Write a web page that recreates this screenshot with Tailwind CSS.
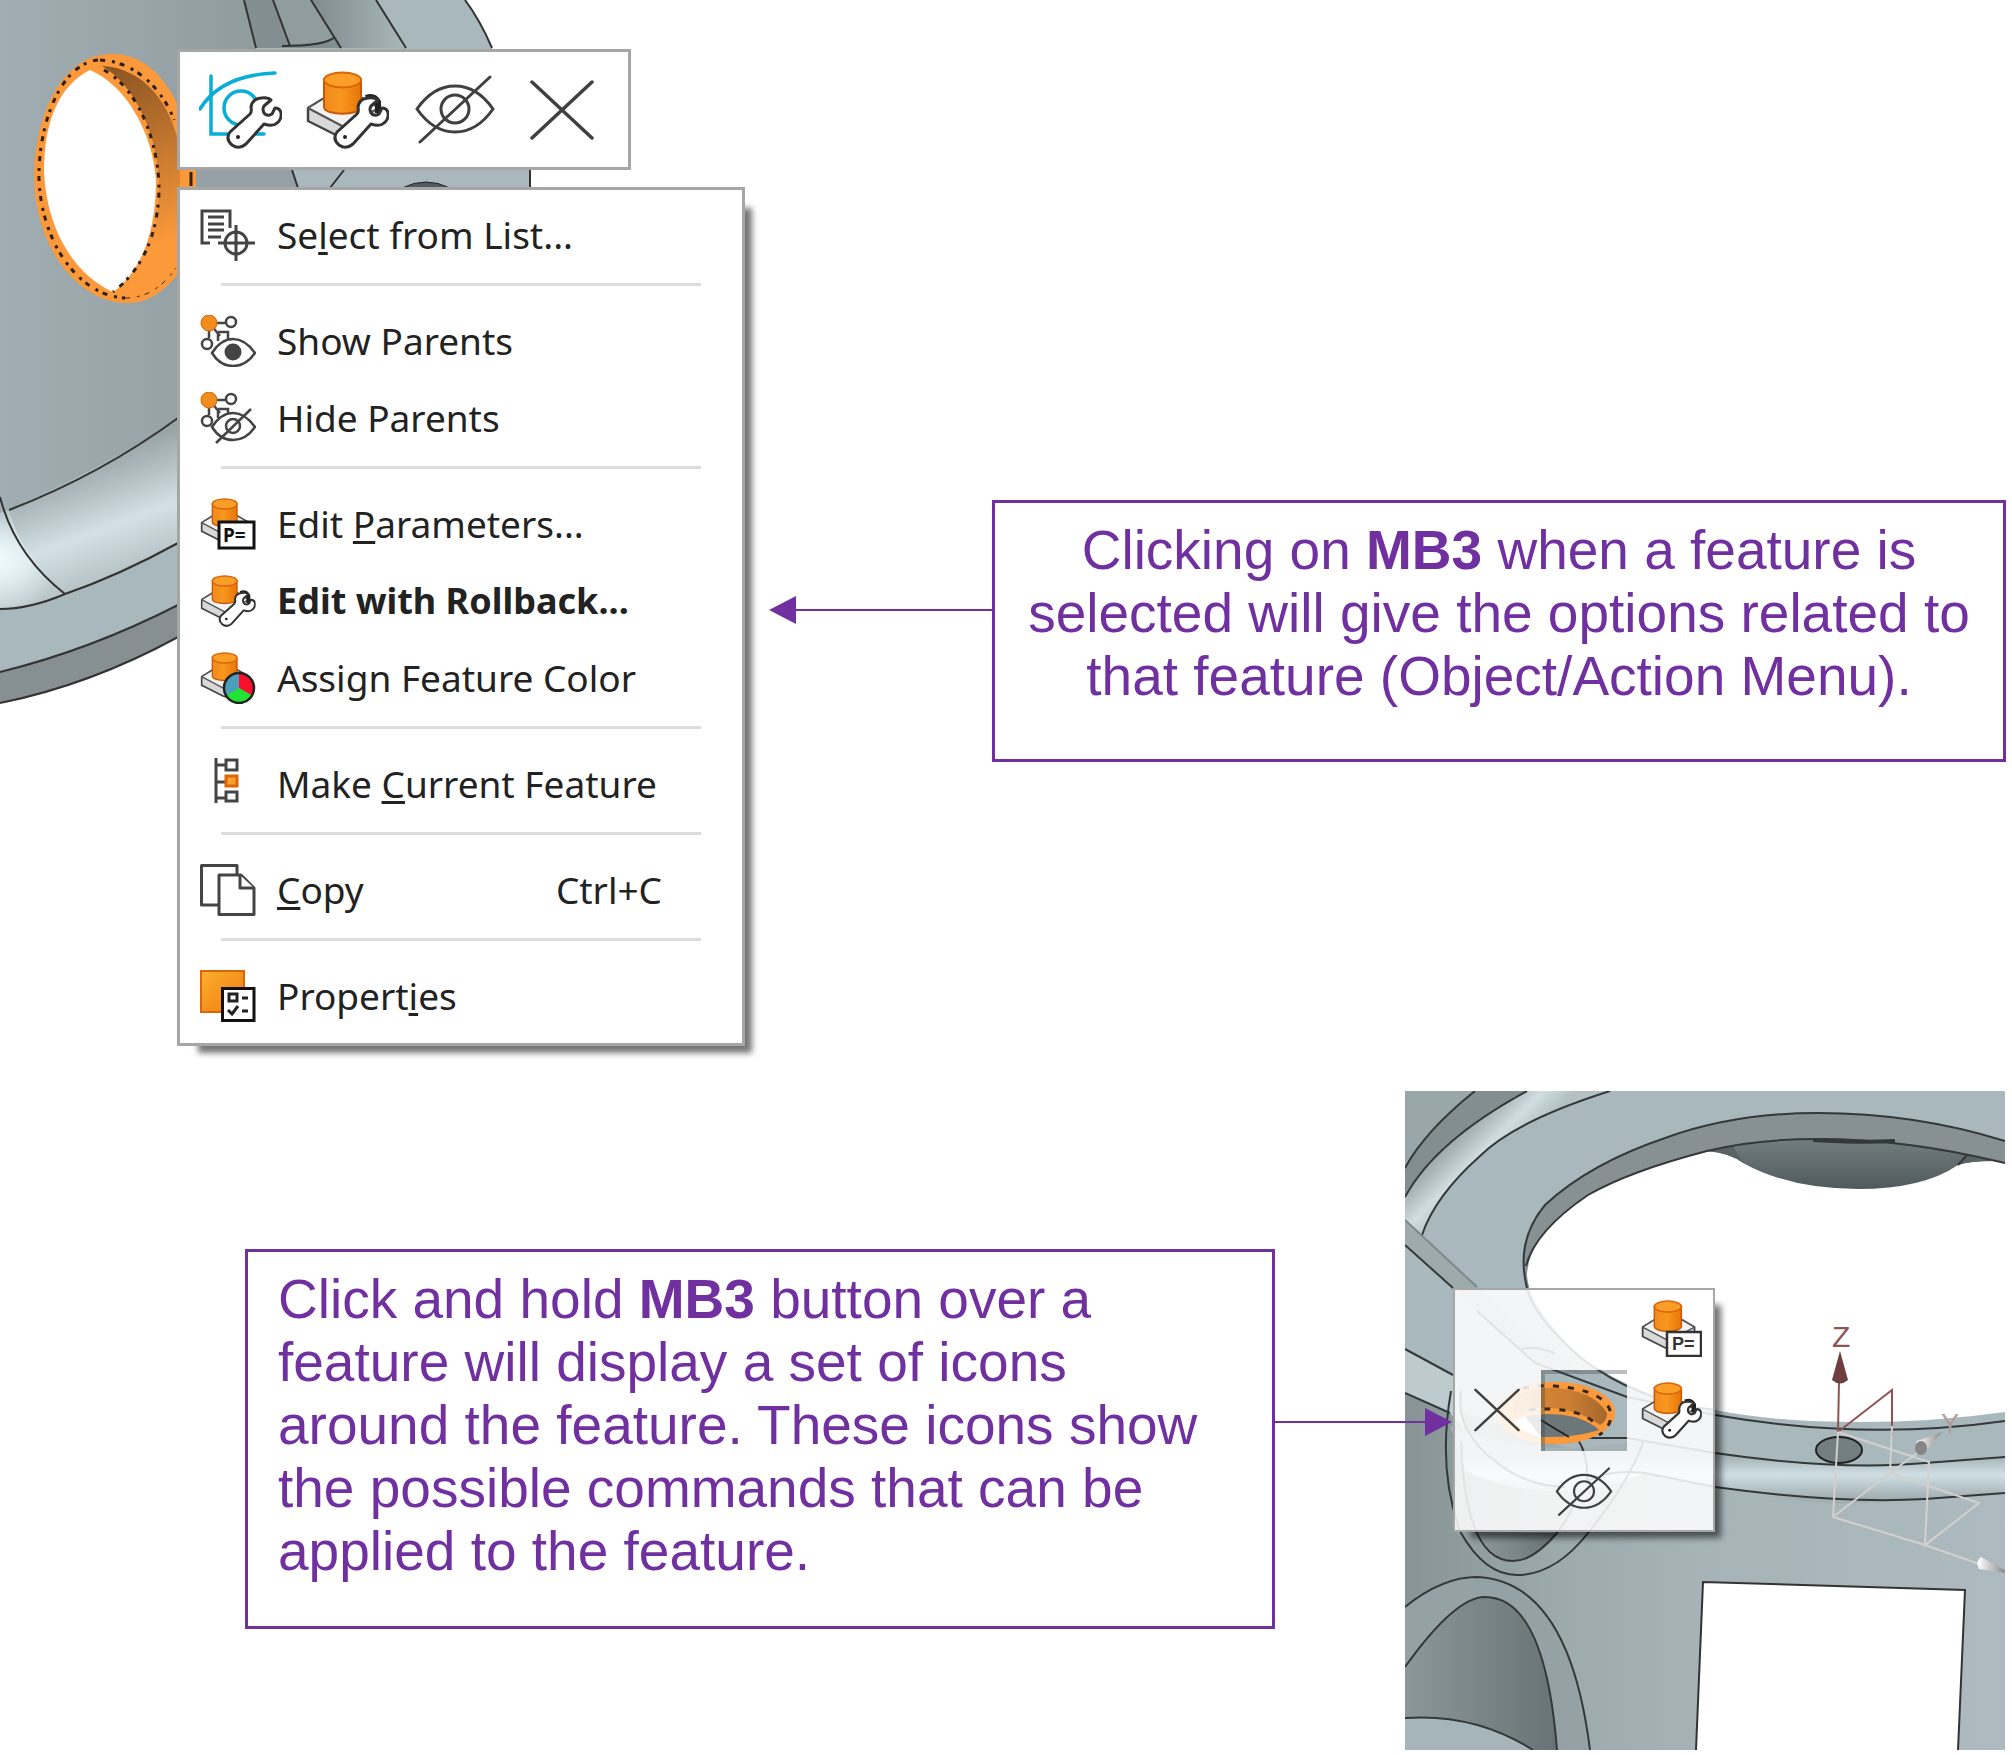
<!DOCTYPE html>
<html lang="en">
<head>
<meta charset="utf-8">
<meta name="viewport" content="width=device-width, initial-scale=1">
<title>MB3 feature menus</title>
<script src="https://cdn.jsdelivr.net/npm/@tailwindcss/browser@4"></script>
</head>
<body class="bg-white font-['Liberation_Sans',Arial,sans-serif] text-[#7030a0]">

<!-- Shared icon parts -->
<svg class="absolute size-0" aria-hidden="true">
  <defs>
    <linearGradient id="orange" x1="0" x2="1"><stop offset="0" stop-color="#f08a1c"/><stop offset=".45" stop-color="#f8981f"/><stop offset="1" stop-color="#e87408"/></linearGradient>
    <linearGradient id="tile" x1="0" y1="0" x2="1" y2="1"><stop offset="0" stop-color="#fdb02f"/><stop offset="1" stop-color="#ee7a10"/></linearGradient>
    <symbol id="solid" viewBox="0 0 83 78">
      <path d="M2 37 20 26H54L73 37V47L40 68 34 66 2 50Z" fill="#d9d9d9" stroke="#444" stroke-width="2.500" stroke-linejoin="round"/>
      <path d="M2 37 20 26H54L73 37 38 56Z" fill="#f3f3f3" stroke="#555" stroke-width="2" stroke-linejoin="round"/>
      <path d="M18 8V36C18 45 55 45 55 36V8Z" fill="url(#orange)" stroke="#c95806" stroke-width="2"/>
      <ellipse cx="36.500" cy="9" rx="18.500" ry="7.500" fill="#fa9e27" stroke="#d9660a" stroke-width="2"/>
    </symbol>
    <symbol id="wrench" viewBox="0 0 83 78">
      <path d="M31 61 51 43Q53 41 52 36 53 28 62 27 69 26 72 29L65 35Q63 38 65 42 68 46 73 43L76 37Q81 37 82 42 83 48 78 52 74 56 65 53L47 73Q40 79 33 74 26 68 31 61Z" fill="#fff" stroke="#333" stroke-width="3" stroke-linejoin="round"/>
      <circle cx="39" cy="66" r="2" fill="#222"/>
    </symbol>
    <symbol id="rollback" viewBox="0 0 83 78">
      <use href="#solid" width="83" height="78"/>
      <path d="M60 27Q68 24 72 31L72 42" fill="none" stroke="#222" stroke-width="6"/>
      <use href="#wrench" width="83" height="78"/>
    </symbol>
    <symbol id="eye-off" viewBox="0 0 80 70">
      <g fill="none" stroke="#404040" stroke-width="3" stroke-linecap="round">
        <path d="M2 34Q18 11 40 11T78 34Q62 57 40 57T2 34Z"/><circle cx="40" cy="34" r="14"/><path d="M5 67 75 2"/>
      </g>
    </symbol>
    <symbol id="cross" viewBox="0 0 64 60"><path d="M2 2 62 58M62 2 2 58" fill="none" stroke="#404040" stroke-width="3.500" stroke-linecap="round"/></symbol>
    <symbol id="nodes" viewBox="0 0 56 52">
      <g fill="none" stroke="#444" stroke-width="2.500"><path d="M9 8H25M9 8V23M11 10 20 21M18 17H28V24M18 17V26"/><circle cx="31" cy="7" r="5"/><circle cx="7" cy="29" r="5"/></g>
      <circle cx="9" cy="8" r="8" fill="#f28c1c" stroke="#d9660a" stroke-width="1"/>
    </symbol>
  </defs>
</svg>

<main class="min-w-[1700px]">

  <!-- Context menu example -->
  <section class="relative flex items-start pr-[6px] pb-[45px]">
    <svg class="absolute left-0 top-0" width="540" height="710" viewBox="0 0 540 710" aria-hidden="true">
      <defs>
        <linearGradient id="wall" x1="0" y1="0" x2="1" y2="0"><stop offset="0" stop-color="#a0adb2"/><stop offset=".5" stop-color="#98a4a7"/><stop offset="1" stop-color="#8b9799"/></linearGradient>
        <linearGradient id="rim" gradientUnits="userSpaceOnUse" x1="60" y1="470" x2="105" y2="590"><stop offset="0" stop-color="#98a4a6"/><stop offset=".55" stop-color="#d3e0e5"/><stop offset="1" stop-color="#b0bdc0"/></linearGradient>
        <radialGradient id="shine" gradientUnits="userSpaceOnUse" cx="0" cy="558" r="60"><stop offset="0" stop-color="#effcff"/><stop offset="1" stop-color="#effcff" stop-opacity="0"/></radialGradient>
        <linearGradient id="bore" gradientUnits="userSpaceOnUse" x1="110" y1="65" x2="170" y2="240"><stop offset="0" stop-color="#8a5422"/><stop offset="1" stop-color="#fb993b"/></linearGradient>
        <linearGradient id="fillet" x1="0" x2="1"><stop offset="0" stop-color="#808b8d"/><stop offset="1" stop-color="#a9b8bc"/></linearGradient>
      </defs>
      <path d="M0 0H465Q480 20 492 48L530 170V300L178 637Q90 685 0 703Z" fill="#a9b8bc"/>
      <path d="M0 0H244L256 48 298 190 178 420Q90 475 0 513Z" fill="url(#wall)"/>
      <path d="M244 0H311L335 37 341 48H256Z" fill="#828e91"/>
      <path d="M273 0H311L335 37Q325 44 290 44Z" fill="#909c9e"/>
      <path d="M311 0H376L406 48H341Z" fill="url(#fillet)"/>
      <path d="M178 168H292L298 190H178Z" fill="#95a1a4"/>
      <path d="M0 513Q100 475 178 418V543Q90 590 65 594 30 609 0 609Z" fill="url(#rim)"/>
      <path d="M0 513 9 510Q20 555 65 594 30 609 0 609Z" fill="url(#shine)"/>
      <path d="M0 672Q90 650 178 605V637Q90 685 0 703Z" fill="#869092"/>
      <g fill="none" stroke="#333" stroke-width="2">
        <path d="M244 0 256 48M273 0 290 46M282 46Q325 46 335 37M311 0 341 48M376 0 406 48M465 0Q480 20 492 48M292 170 298 188M344 170 330 188M530 170V188"/>
        <path d="M9 510Q100 475 178 418M0 497Q15 555 65 594M0 609Q30 609 65 594 120 575 178 543M0 672Q90 650 178 605M0 703Q90 685 178 637"/>
      </g>
      <path d="M402 188Q426 176 450 188Z" fill="#525c5f" stroke="#222"/>
      <path d="M112 54C62 54 34 115 34 180 36 250 80 303 127 303 150 303 165 290 180 272V188H196V170H178V105C162 72 140 54 112 54Z" fill="#fb993b"/>
      <path d="M102 66C145 68 172 105 180 150V250C165 275 140 292 113 293 148 265 160 225 159 180 157 135 135 85 102 66Z" fill="url(#bore)"/>
      <path d="M90 70C60 85 44 120 44 170 46 230 75 275 113 292 140 272 156 235 156 180 152 130 125 85 90 70Z" fill="#fff"/>
      <g fill="none" stroke="#2b2118" stroke-width="3" stroke-dasharray="5 7 3 5">
        <path d="M98 60C60 64 38 125 39 180 42 245 80 296 125 298M104 70C140 90 159 145 159 190 158 235 142 270 113 292M100 60C140 62 165 95 174 120"/>
        <path d="M125 298Q155 298 176 268" stroke-width="1"/><path d="M191 172V186" stroke-dasharray="none"/>
      </g>
    </svg>

    <div class="relative w-[769px] shrink-0 pl-[177px] pt-[49px]">
      <div class="flex h-[121px] w-[454px] items-center border-3 border-[#a6a6a6] bg-white pl-[7px]" role="toolbar" aria-label="Feature shortcuts">
        <button class="flex w-[107px] justify-center" aria-label="Edit sketch">
          <svg width="83" height="78" viewBox="0 0 83 78"><g fill="none" stroke="#08aed6" stroke-width="3.500" stroke-linecap="round"><path d="M12 5V63H65M1 38Q22 4 76 2"/><circle cx="42" cy="37" r="17"/></g><use href="#wrench" width="83" height="78"/></svg>
        </button>
        <button class="flex w-[107px] justify-center" aria-label="Edit with rollback"><svg width="83" height="78"><use href="#rollback"/></svg></button>
        <button class="flex w-[107px] justify-center" aria-label="Hide"><svg width="80" height="70"><use href="#eye-off"/></svg></button>
        <button class="flex w-[107px] justify-center" aria-label="Delete"><svg width="64" height="60"><use href="#cross"/></svg></button>
      </div>

      <div class="mt-[17px] w-[568px] border-3 border-[#a6a6a6] bg-white pt-[6px] pb-[9px] font-['Noto_Sans','Open_Sans',sans-serif] text-[37px] text-[#222] shadow-[14px_14px_6px_-7px_#777]" role="menu">
        <button role="menuitem" class="flex h-[77px] w-full items-center gap-[21px] pl-[20px] text-left">
          <svg width="56" height="52" viewBox="0 0 56 52" fill="none" stroke="#444" stroke-width="3"><path d="M30 19V2H2V34H10M8 8H24M8 15H24M8 21H24M8 28H21"/><circle cx="36" cy="34" r="11"/><path d="M18 34H55M36 16V52"/></svg>
          <span>Se<u class="decoration-3 underline-offset-3">l</u>ect from List...</span>
        </button>
        <hr class="mt-[10px] mr-[41px] mb-[16px] ml-[41px] border-t-3 border-[#dcdcdc]">
        <button role="menuitem" class="flex h-[77px] w-full items-center gap-[21px] pl-[20px] text-left">
          <svg width="56" height="52" viewBox="0 0 56 52"><use href="#nodes"/><path d="M12 38Q21 24 33 24T55 38Q46 51 33 51T12 38Z" fill="#fff" stroke="#444" stroke-width="2.500"/><circle cx="33" cy="37" r="8.500" fill="#444"/></svg>
          <span>Show Parents</span>
        </button>
        <button role="menuitem" class="flex h-[77px] w-full items-center gap-[21px] pl-[20px] text-left">
          <svg width="56" height="52" viewBox="0 0 56 52"><use href="#nodes"/><g fill="#fff" stroke="#444" stroke-width="2.500"><path d="M12 35Q21 21 33 21T55 35Q46 48 33 48T12 35Z"/><circle cx="33" cy="34" r="7"/><path d="M16 51 51 17"/></g></svg>
          <span>Hide Parents</span>
        </button>
        <hr class="mt-[10px] mr-[41px] mb-[16px] ml-[41px] border-t-3 border-[#dcdcdc]">
        <button role="menuitem" class="flex h-[77px] w-full items-center gap-[21px] pl-[20px] text-left">
          <svg width="56" height="52" viewBox="0 0 56 52"><use href="#solid" width="56" height="52"/><path d="M19 24H54V50H19Z" fill="#fff" stroke="#111" stroke-width="3"/><text x="23" y="44" font-size="19" font-weight="700" fill="#111">P=</text></svg>
          <span>Edit <u class="decoration-3 underline-offset-3">P</u>arameters...</span>
        </button>
        <button role="menuitem" class="flex h-[77px] w-full items-center gap-[21px] pl-[20px] text-left text-[36px] font-bold">
          <svg width="56" height="52"><use href="#rollback"/></svg>
          <span>Edit with Rollback...</span>
        </button>
        <button role="menuitem" class="flex h-[77px] w-full items-center gap-[21px] pl-[20px] text-left">
          <svg width="56" height="52" viewBox="0 0 56 52"><use href="#solid" width="56" height="52"/><circle cx="39" cy="36" r="15" fill="#4b9fbd"/><path d="M39 36V21A15 15 0 0 1 52 43.500Z" fill="#fb0f2c"/><path d="M39 36 52 43.500A15 15 0 0 1 26 43.500Z" fill="#22e434"/><circle cx="39" cy="36" r="15" fill="none" stroke="#222" stroke-width="2.500"/></svg>
          <span>Assign Feature Color</span>
        </button>
        <hr class="mt-[10px] mr-[41px] mb-[16px] ml-[41px] border-t-3 border-[#dcdcdc]">
        <button role="menuitem" class="flex h-[77px] w-full items-center gap-[21px] pl-[20px] text-left">
          <svg width="56" height="52" viewBox="0 0 56 52" fill="none" stroke="#444" stroke-width="3"><path d="M16 0V45M16 7H25M16 24H25M16 40H25M26 2H37V12H26ZM26 34H37V43H26Z"/><path d="M26 18H37V28H26Z" fill="#f9a12a" stroke="#dd6508"/></svg>
          <span>Make <u class="decoration-3 underline-offset-3">C</u>urrent Feature</span>
        </button>
        <hr class="mt-[10px] mr-[41px] mb-[16px] ml-[41px] border-t-3 border-[#dcdcdc]">
        <button role="menuitem" class="flex h-[77px] w-full items-center gap-[21px] pr-[80px] pl-[20px] text-left">
          <svg width="56" height="52" viewBox="0 0 56 52" fill="#fff" stroke="#444" stroke-width="3" stroke-linejoin="round"><path d="M1.500 1.500H37V41H1.500Z"/><path d="M19 11H41L54 24V50.500H19Z"/><path d="M40 11V24H54"/></svg>
          <span><u class="decoration-3 underline-offset-3">C</u>opy</span>
          <span class="ml-auto">Ctrl+C</span>
        </button>
        <hr class="mt-[10px] mr-[41px] mb-[16px] ml-[41px] border-t-3 border-[#dcdcdc]">
        <button role="menuitem" class="flex h-[77px] w-full items-center gap-[21px] pl-[20px] text-left">
          <svg width="56" height="52" viewBox="0 0 56 52"><path d="M1 1H44V42H1Z" fill="url(#tile)" stroke="#d9660a" stroke-width="2"/><path d="M22.500 18.500H54V50.500H22.500Z" fill="#fff" stroke="#111" stroke-width="3"/><path d="M29 24H37V31H29ZM42 28H48M42 41H48M28 40 32 44 38 36" fill="none" stroke="#222" stroke-width="3"/></svg>
          <span>Propert<u class="decoration-3 underline-offset-3">i</u>es</span>
        </button>
      </div>
    </div>

    <div class="flex w-[223px] shrink-0 items-center pt-[596px]">
      <svg width="27" height="28" aria-hidden="true"><path d="M0 14 27 0V28Z" fill="#7030a0"/></svg>
      <span class="h-[2px] flex-1 bg-[#7030a0]"></span>
    </div>
    <div class="min-w-0 flex-1 pt-[500px]">
      <p class="border-3 border-[#7030a0] px-[28px] pt-[16px] pb-[51px] text-center text-[55px] leading-[63px]">Clicking on <b>MB3</b> when a feature is selected will give the options related to that feature (Object/Action Menu).</p>
    </div>
  </section>

  <!-- Radial menu example -->
  <section class="flex items-start pr-[7px] pb-[5px] pl-[245px]">
    <div class="min-w-0 flex-1 pt-[158px]">
      <p class="border-3 border-[#7030a0] pt-[16px] pr-[64px] pb-[43px] pl-[30px] text-[55px] leading-[63px]">Click and hold <b>MB3</b> button over a feature will display a set of icons around the feature. These icons show the possible commands that can be applied to the feature.</p>
    </div>
    <div class="z-10 -mr-[47px] flex w-[177px] shrink-0 items-center pt-[317px]">
      <span class="h-[2px] flex-1 bg-[#7030a0]"></span>
      <svg width="27" height="28" aria-hidden="true"><path d="M27 14 0 0V28Z" fill="#7030a0"/></svg>
    </div>

    <div class="relative w-[600px] shrink-0">
      <svg class="block w-full" viewBox="0 0 600 659" aria-hidden="true">
        <defs>
          <linearGradient id="body" x1="0" x2="1"><stop offset="0" stop-color="#879395"/><stop offset=".25" stop-color="#9caaac"/><stop offset=".5" stop-color="#a6b4b8"/><stop offset="1" stop-color="#adbbc0"/></linearGradient>
          <linearGradient id="dome" x1="0" y1="0" x2="0" y2="1"><stop offset="0" stop-color="#727d80"/><stop offset="1" stop-color="#505a5d"/></linearGradient>
          <linearGradient id="lip" gradientUnits="userSpaceOnUse" x1="0" y1="365" x2="0" y2="407"><stop offset="0" stop-color="#a4b2b5"/><stop offset=".45" stop-color="#cfdfe4"/><stop offset="1" stop-color="#a2afb3"/></linearGradient>
          <linearGradient id="lipl" gradientUnits="userSpaceOnUse" x1="55" y1="35" x2="95" y2="75"><stop offset="0" stop-color="#94a0a3"/><stop offset=".6" stop-color="#d0dde1"/><stop offset="1" stop-color="#b3c1c5"/></linearGradient>
          <linearGradient id="pocket" x1="0" x2="1"><stop offset="0" stop-color="#8c9799"/><stop offset="1" stop-color="#687376"/></linearGradient>
          <linearGradient id="cone" x1="0" x2="1"><stop offset="0" stop-color="#fff"/><stop offset="1" stop-color="#8b8b8b"/></linearGradient>
          <linearGradient id="inner" x1="0" x2="1"><stop offset="0" stop-color="#d98634"/><stop offset=".6" stop-color="#cc7e33"/><stop offset="1" stop-color="#a4672c"/></linearGradient>
          <filter id="soft" x="-10%" y="-10%" width="120%" height="120%"><feGaussianBlur stdDeviation="3"/></filter>
          <clipPath id="outside"><path clip-rule="evenodd" d="M0 0H600V659H0ZM48 197H310V441H48Z"/></clipPath>
        </defs>
        <path d="M0 0H600V659H0Z" fill="url(#body)"/>
        <!-- flange and outer lip -->
        <path d="M0 0H600V400Q460 425 310 396L230 380 0 302Z" fill="#a9b8bc"/>
        <path d="M0 0H70Q20 40 0 77Z" fill="#9aa7aa"/>
        <path d="M70 0H122Q30 50 0 106V77Q20 40 70 0Z" fill="#828e90"/>
        <path d="M122 0H205Q110 30 75 65 30 105 17 144L0 129V106Q30 50 122 0Z" fill="url(#lipl)"/>
        <path d="M0 129 72 196 130 250 180 285 130 270 48 197 0 154Z" fill="#9eabad"/>
        <path d="M0 258 48 284 60 340 45 322 0 302Z" fill="#bdcbcf"/>
        <path d="M45 335Q130 370 240 349L310 362Q433 380 520 372L600 366V402Q520 408 433 413 370 410 310 396L240 382Q150 420 60 380Z" fill="url(#lip)"/>
        <!-- opening -->
        <path d="M600 50Q510 22 413 22 330 22 263 46 185 72 140 114 110 150 122 197L170 180 600 110Z" fill="#879193"/>
        <path d="M600 72Q501 48 413 48 350 48 302 60 225 80 183 104 122 145 122 185 124 215 175 266 240 310 310 319 370 331 455 331 530 331 600 321Z" fill="#fff"/>
        <path d="M302 60Q350 48 413 48 520 48 588 70 565 70 553 74 518 98 453 98 385 98 338 72 325 62 302 60Z" fill="url(#dome)"/>
        <path d="M302 60Q325 62 338 72L328 55ZM588 70Q565 70 553 74L562 64Z" fill="#5a6467"/>
        <g fill="none" stroke="#333839" stroke-width="2">
          <path d="M70 0Q20 40 0 77M122 0Q30 50 0 106M205 0Q110 30 75 65 30 105 17 144M0 154 48 197M0 258 48 284M0 302 45 322"/>
          <path d="M0 129 72 196" stroke="#7d898b"/>
          <path d="M600 50Q510 22 413 22 330 22 263 46 185 72 140 114 110 150 122 197M600 72Q501 48 413 48 350 48 302 60 225 80 183 104 130 140 121 175"/>
          <path d="M408 49Q455 52 490 50" stroke-width="4"/><path d="M562 64 553 74"/>
          <path d="M72 220 130 272 222 306 310 324Q460 350 600 330M170 347H222L310 362Q433 380 520 372L600 366M182 390Q205 378 240 382L310 396Q433 413 520 408L600 402"/>
          <path d="M122 197Q128 225 175 266 230 310 310 319M56 300Q50 340 90 370 120 395 160 396M116 258Q128 254 150 262"/>
        </g>
        <ellipse cx="434" cy="359" rx="23" ry="13" fill="#727e81" stroke="#222" stroke-width="2"/>
        <!-- pockets -->
        <path d="M74 442Q88 470 108 470 135 464 152 442Z" fill="url(#pocket)"/>
        <path d="M0 516Q37 486 72 486 164 490 185 659H0Z" fill="#95a2a5"/>
        <path d="M0 576Q50 506 80 506 140 506 152 659H0Z" fill="url(#pocket)"/>
        <path d="M0 627Q70 622 128 659H0Z" fill="#a6b5ba"/>
        <g fill="none" stroke="#333839" stroke-width="2">
          <path d="M46 300Q32 380 56 442 80 484 112 484 150 484 183 442 225 390 239 349M56 350Q60 470 108 470 128 470 152 442 165 425 172 405M0 516Q37 486 72 486 164 490 185 659M0 576Q50 506 80 506 140 506 152 659M0 627Q70 622 128 659M172 347Q184 365 182 390"/>
        </g>
        <path d="M298 491 560 499 553 659H291Z" fill="#fff"/><path d="M291 659 298 491 560 499 553 659" fill="none" stroke="#333" stroke-width="2"/>
        <!-- selected hole -->
        <ellipse cx="151" cy="322" rx="59" ry="31" fill="#fb993b"/>
        <path d="M108 308Q122 296 145 297 188 298 202 322 202 330 195 334 170 316 136 317 118 318 108 324Z" fill="url(#inner)"/>
        <path d="M112 328Q140 319 170 326 188 332 194 339 170 347 136 346 120 342 112 328Z" fill="#6c7779"/>
        <path d="M110 330 120 325 136 346Q116 342 110 330Z" fill="#fff"/>
        <path d="M134 328 164 346" stroke="#222" stroke-width="2"/>
        <g fill="none" stroke="#33271b" stroke-width="3" stroke-dasharray="6 9"><path d="M118 297Q134 294 150 295 206 300 206 326 204 338 194 344M124 319Q175 314 194 336"/></g>
        <!-- radial menu backdrop with a clear window over the feature -->
        <g clip-path="url(#outside)"><path d="M66 214H316V447H66Z" fill="#000" fill-opacity=".55" filter="url(#soft)"/></g>
        <path fill-rule="evenodd" d="M48 197H310V441H48ZM136 279H222V360H136Z" fill="#fff" fill-opacity=".86"/>
        <path d="M49 198H309V440H49Z" fill="none" stroke="#a6a6a6" stroke-width="2"/>
        <path d="M136 281H222M138 279V360" fill="none" stroke="#3d4648" stroke-opacity=".35" stroke-width="4"/>
        <!-- axis triad -->
        <g fill="none" stroke="#8f5352" stroke-width="2"><path d="M434 291 433 341 487 299V345"/></g>
        <path d="M435 260 443 289Q435 296 427 289Z" fill="#6d3f40"/>
        <g fill="none" stroke="#d3d0d0" stroke-width="2"><path d="M433 341 428 426 520 454 580 475M428 426 485 382 516 359M433 341 524 371 520 454 574 412 485 382 487 335"/></g>
        <path d="M537 341 512 350Q508 359 518 363Z" fill="url(#cone)"/><ellipse cx="516" cy="357" rx="6" ry="7" fill="#858585"/>
        <path d="M576 466 600 479V482L574 478Q570 470 576 466Z" fill="url(#cone)"/>
        <text x="427" y="256" font-size="30" fill="#8f5352">Z</text>
        <text x="536" y="342" font-size="27" fill="#b39c9c">Y</text>
      </svg>

      <div class="absolute top-[197px] left-[48px] grid h-[245px] w-[262px] grid-cols-3 grid-rows-3 place-items-center" role="menu" aria-label="Radial menu">
        <button class="col-start-3" aria-label="Edit parameters"><svg width="61" height="57" viewBox="0 0 61 57"><use href="#solid" width="61" height="57"/><path d="M26 32H60V56H26Z" fill="#fff" stroke="#333" stroke-width="2.500"/><text x="31" y="50" font-size="18" font-weight="700" fill="#333">P=</text></svg></button>
        <button class="col-start-1 row-start-2" aria-label="Delete"><svg width="46" height="44"><use href="#cross"/></svg></button>
        <button class="col-start-3 row-start-2" aria-label="Edit with rollback"><svg width="61" height="57"><use href="#rollback"/></svg></button>
        <button class="col-start-2 row-start-3" aria-label="Hide"><svg width="58" height="50"><use href="#eye-off"/></svg></button>
      </div>
    </div>
  </section>
</main>
</body>
</html>
